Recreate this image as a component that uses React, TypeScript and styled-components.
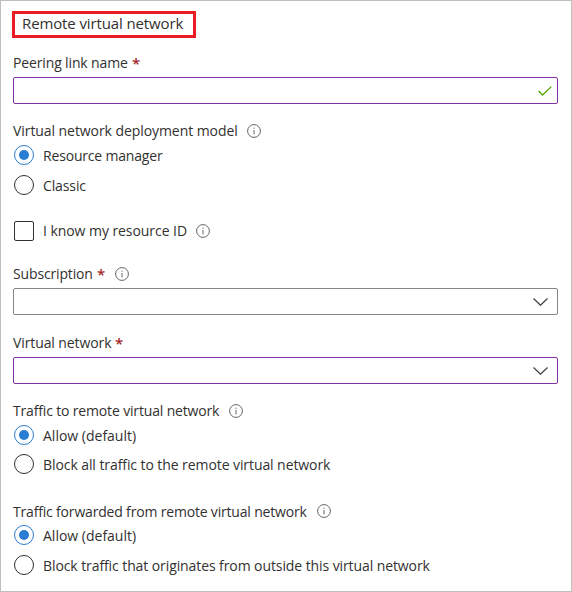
import React from "react";
import styled, { createGlobalStyle } from "styled-components";

const GlobalStyle = createGlobalStyle`
  * { box-sizing: border-box; }
  body {
    margin: 0;
    background: #fff;
    color: #323130;
    font: 400 14px/20px "Open Sans", "Noto Sans", sans-serif;
  }
`;

const Panel = styled.main`
  width: 572px;
  height: 592px;
  padding: 10px 13px 0 12px;
  border: 1px solid #bfbfbf;
  overflow: hidden;
`;

const Heading = styled.h1`
  display: flex;
  align-items: center;
  width: 184px;
  height: 27px;
  margin: 0 0 0 -1px;
  padding: 0 0 3px 7px;
  border: 3px solid #ed1c24;
  font-size: 15px;
  font-weight: 400;
  line-height: 20px;
  white-space: nowrap;
`;

const Field = styled.section<{ $gap: number }>`
  display: flex;
  flex-direction: column;
  margin-top: ${(p) => p.$gap}px;
`;

const LabelRow = styled.div`
  display: flex;
  align-items: center;
  height: 22px;
`;

const Text = styled.span<{ $width: number; $spacing?: number; $drop?: boolean }>`
  flex: none;
  width: ${(p) => p.$width}px;
  padding-top: ${(p) => (p.$drop ? 2 : 0)}px;
  letter-spacing: ${(p) => p.$spacing ?? 0}px;
  white-space: nowrap;
`;

const Required = styled.span`
  margin-left: 4px;
  width: 8px;
  color: #a4262c;
  font-size: 15px;
  font-weight: 600;
`;

const InfoSvg = styled.svg<{ $gap: number }>`
  flex: none;
  width: 14px;
  height: 14px;
  margin-left: ${(p) => p.$gap}px;
`;

const InputBox = styled.div<{ $accent?: boolean; $inset: number }>`
  display: flex;
  align-items: center;
  justify-content: flex-end;
  height: 27px;
  margin-top: 3px;
  padding-right: ${(p) => p.$inset}px;
  border: 1px solid ${(p) => (p.$accent ? "#8332a4" : "#858585")};
  border-radius: 2px;
`;

const Choice = styled.label<{ $gap?: number }>`
  display: flex;
  align-items: center;
  height: 20px;
  margin-top: ${(p) => p.$gap ?? 0}px;
  padding-left: 1px;
`;

const Radio = styled.span<{ $on?: boolean }>`
  display: grid;
  place-items: center;
  flex: none;
  width: 20px;
  height: 20px;
  margin-right: 9px;
  border: 1px solid ${(p) => (p.$on ? "#2b7cd3" : "#323130")};
  border-radius: 50%;

  &::after {
    content: "";
    width: 10px;
    height: 10px;
    border-radius: 50%;
    background: ${(p) => (p.$on ? "#2b7cd3" : "transparent")};
  }
`;

const Checkbox = styled.span`
  flex: none;
  width: 20px;
  height: 20px;
  margin-right: 9px;
  border: 1px solid #323130;
  border-radius: 2px;
`;

const Info = ({ gap }: { gap: number }) => (
  <InfoSvg $gap={gap} viewBox="0 0 14 14" fill="none">
    <circle cx="7" cy="7" r="6.4" stroke="#646464" strokeWidth="1" />
    <path d="M7 6v4.4M7 3.6v1.2" stroke="#646464" strokeWidth="1" />
  </InfoSvg>
);

const Check = () => (
  <svg width="14" height="10" viewBox="0 0 14 10" fill="none">
    <path d="M.6 5 4.6 9 13.3.6" stroke="#57a300" strokeWidth="1.3" />
  </svg>
);

const Chevron = () => (
  <svg width="15" height="8" viewBox="0 0 15 8" fill="none">
    <path d="M.5.5 7.5 7.2 14.5.5" stroke="#444" strokeWidth="1.3" />
  </svg>
);

export default function App() {
  return (
    <>
      <GlobalStyle />
      <Panel>
        <Heading>
          <Text $width={162} $spacing={-0.12}>Remote virtual network</Text>
        </Heading>

        <Field $gap={14}>
          <LabelRow>
            <Text $width={115} $spacing={-0.14}>Peering link name</Text>
            <Required>*</Required>
          </LabelRow>
          <InputBox $accent $inset={5}>
            <Check />
          </InputBox>
        </Field>

        <Field $gap={16}>
          <LabelRow>
            <Text $width={225} $spacing={-0.07}>Virtual network deployment model</Text>
            <Info gap={9} />
          </LabelRow>
          <Choice $gap={3}>
            <Radio $on />
            <Text $width={120} $spacing={-0.18} $drop>Resource manager</Text>
          </Choice>
          <Choice $gap={10}>
            <Radio />
            <Text $width={44} $spacing={-0.12} $drop>Classic</Text>
          </Choice>
        </Field>

        <Field $gap={26}>
          <Choice>
            <Checkbox />
            <Text $width={145} $spacing={-0.06}>I know my resource ID</Text>
            <Info gap={8} />
          </Choice>
        </Field>

        <Field $gap={22}>
          <LabelRow>
            <Text $width={80} $spacing={-0.15}>Subscription</Text>
            <Required>*</Required>
            <Info gap={10} />
          </LabelRow>
          <InputBox $inset={9}>
            <Chevron />
          </InputBox>
        </Field>

        <Field $gap={17}>
          <LabelRow>
            <Text $width={98} $spacing={-0.1}>Virtual network</Text>
            <Required>*</Required>
          </LabelRow>
          <InputBox $accent $inset={9}>
            <Chevron />
          </InputBox>
        </Field>

        <Field $gap={16}>
          <LabelRow>
            <Text $width={207} $spacing={-0.16}>Traffic to remote virtual network</Text>
            <Info gap={9} />
          </LabelRow>
          <Choice $gap={3}>
            <Radio $on />
            <Text $width={94} $drop>Allow (default)</Text>
          </Choice>
          <Choice $gap={9}>
            <Radio />
            <Text $width={288} $spacing={-0.08} $drop>Block all traffic to the remote virtual network</Text>
          </Choice>
        </Field>

        <Field $gap={26}>
          <LabelRow>
            <Text $width={295} $spacing={-0.18} $drop>Traffic forwarded from remote virtual network</Text>
            <Info gap={9} />
          </LabelRow>
          <Choice $gap={3}>
            <Radio $on />
            <Text $width={94} $drop>Allow (default)</Text>
          </Choice>
          <Choice $gap={10}>
            <Radio />
            <Text $width={388} $spacing={-0.09} $drop>Block traffic that originates from outside this virtual network</Text>
          </Choice>
        </Field>
      </Panel>
    </>
  );
}
